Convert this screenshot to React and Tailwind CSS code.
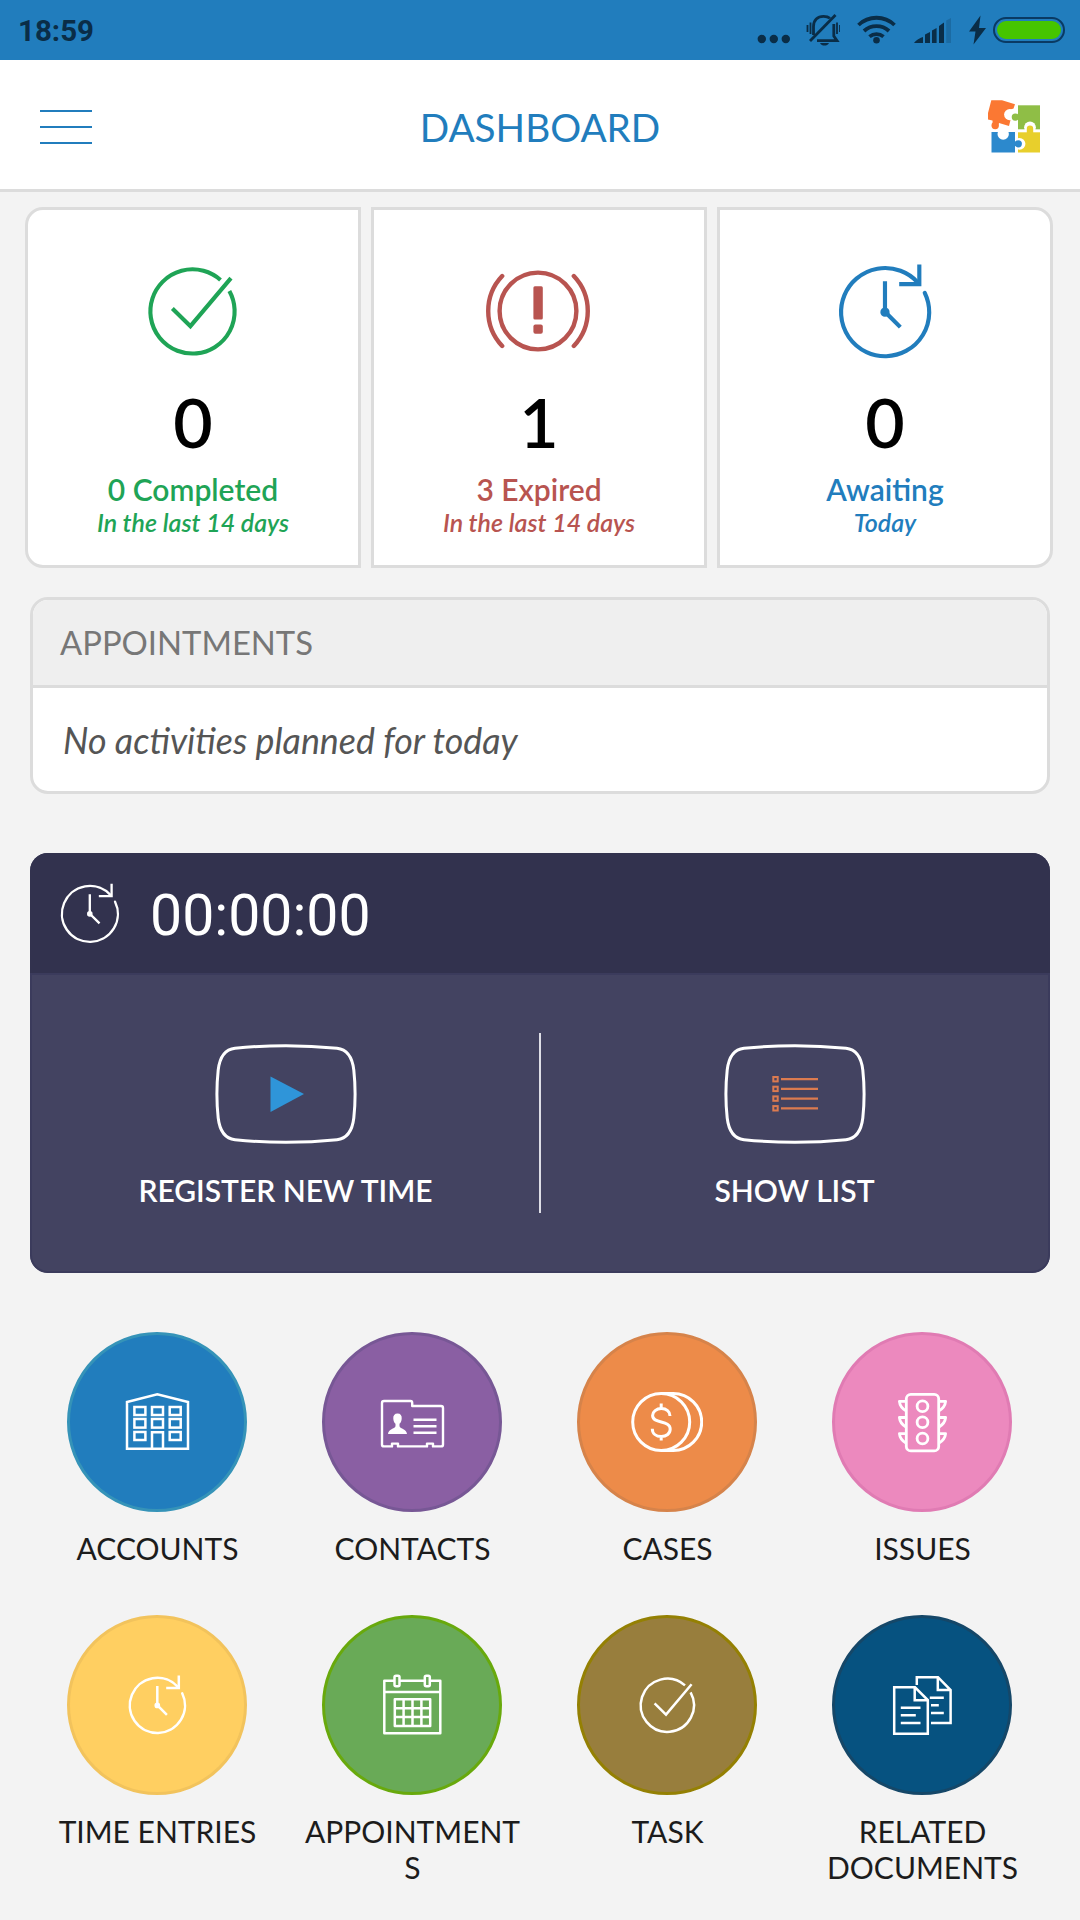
import React from "react";

const svgProps = {
  fill: "none",
  stroke: "currentColor",
  viewBox: "0 0 72 72",
};

const ClockIcon = ({ className, strokeWidth = 2.5 }) => (
  <svg {...svgProps} strokeWidth={strokeWidth} className={className}>
    <path d="M61.2 24.3A27.6 27.6 0 1 1 56.6 17.6" strokeLinecap="round" />
    <path d="M57.8 6.6V18.9H45.2" />
    <path d="M36.3 17v19.2l9.6 9.6" />
    <circle cx="36.3" cy="36.4" r="1.6" fill="currentColor" />
  </svg>
);

const CheckIcon = ({ className, strokeWidth = 2.5 }) => (
  <svg {...svgProps} strokeWidth={strokeWidth} className={className}>
    <path d="M59.6 23.4A26.6 26.6 0 1 1 54 16.4" />
    <path d="M23.6 34.4L35 45.6L60.6 15.2" />
  </svg>
);

const AlertIcon = ({ className }) => (
  <svg fill="none" stroke="currentColor" strokeWidth="4.4" viewBox="0 0 110 90" className={className}>
    <circle cx="55" cy="45" r="38.4" />
    <path d="M19.2 10A50.8 50.8 0 0 0 19.2 80M90.8 10A50.8 50.8 0 0 1 90.8 80" strokeLinecap="round" />
    <rect x="50.4" y="20.2" width="9.4" height="33.4" rx="1.5" fill="currentColor" stroke="none" />
    <rect x="50.4" y="58.4" width="9.4" height="9.4" rx="2" fill="currentColor" stroke="none" />
  </svg>
);

const BuildingIcon = ({ className }) => (
  <svg {...svgProps} strokeWidth="2.5" className={className}>
    <path d="M6 62.7V16L36.3 8.3L67 16V62.7Z" />
    {[13.4, 31, 48.7].map((x) => (
      <g key={x}>
        <rect x={x} y="21" width="11" height="8" />
        <rect x={x} y="33" width="11" height="8.6" />
        {x !== 31 && <rect x={x} y="46" width="11" height="8" />}
      </g>
    ))}
    <path d="M31 62.7V46.2H42V62.7" />
  </svg>
);

const ContactIcon = ({ className }) => (
  <svg {...svgProps} strokeWidth="2.4" strokeLinejoin="round" className={className}>
    <path d="M8 15H34.5a1.7 1.7 0 0 1 1.7 1.7V20H65a2 2 0 0 1 2 2V58.4a2 2 0 0 1-2 2H57V57.6H51V60.4H22V57.6H16V60.4H8a2 2 0 0 1-2-2V17a2 2 0 0 1 2-2Z" />
    <path
      d="M21.6 27.4c-3 0-4.6 2-4.3 5 .1 2.3 1 4.3 2.2 5.4v2.4c-1 2.8-7 2.4-7.5 7.8H31c-.5-5.4-6.5-5-7.5-7.8v-2.4c1.2-1.1 2.1-3.1 2.2-5.4.3-3-1.2-5-4.1-5Z"
      fill="currentColor"
      stroke="none"
    />
    <path d="M37.5 33.7h23M37.5 40.3h23M37.5 46.7h23" />
  </svg>
);

const CoinsIcon = ({ className }) => (
  <svg {...svgProps} strokeWidth="3" className={className}>
    <circle cx="30.2" cy="36" r="28.5" />
    <path d="M30.2 7.5H42.2a28.5 28.5 0 0 1 0 57H30.2" />
    <path d="M39 29.9c0-4.3-3.6-7.3-8.6-7.3s-8.8 3-8.8 6.8c0 8.8 17.6 4.4 17.6 13.6 0 4.6-3.8 7.6-8.9 7.6-5.3 0-9-3.2-9-7.9M30.2 17.5v5M30.2 50.5v4" />
  </svg>
);

const TrafficLightIcon = ({ className }) => (
  <svg {...svgProps} strokeWidth="2.8" strokeLinejoin="round" className={className}>
    <rect x="20.3" y="8.3" width="32.4" height="56.6" rx="4.5" />
    {[20.2, 36.3, 52.5].map((y) => (
      <circle key={y} cx="36.5" cy={y} r="5.4" />
    ))}
    <path d="M20.3 15.3H13.4c.4 4 3 7.5 6.9 9.7M20.3 31.5H13.4c.4 4 3 7.5 6.9 9.7M20.3 47.7H13.4c.4 4 3 7.5 6.9 9.7" />
    <path d="M52.7 15.3H59.6c-.4 4-3 7.5-6.9 9.7M52.7 31.5H59.6c-.4 4-3 7.5-6.9 9.7M52.7 47.7H59.6c-.4 4-3 7.5-6.9 9.7" />
  </svg>
);

const CalendarIcon = ({ className }) => (
  <svg {...svgProps} strokeWidth="2.5" strokeLinejoin="round" className={className}>
    <path d="M18.5 11.8H8.3V64.3H64.3V11.8H53.8M23.5 11.8H48.8M8.3 23H64.3" />
    <rect x="18.5" y="6.8" width="5" height="10.4" rx="1.5" />
    <rect x="48.8" y="6.8" width="5" height="10.4" rx="1.5" />
    <path d="M18.8 30.3H54.2V57H18.8ZM18.8 39.2H54.2M18.8 48.1H54.2M27.6 30.3V57M36.5 30.3V57M45.4 30.3V57" />
  </svg>
);

const DocumentsIcon = ({ className }) => (
  <svg {...svgProps} strokeWidth="2.5" className={className}>
    <path d="M8.2 18.3H29L41.8 31V64.8H8.2ZM28.7 18.3V31.2H41.8" />
    <path d="M14.8 38.7H34.5M14.8 46.3H29.8M14.8 54H34.5" />
    <path d="M30.8 16V8.2H52L64.6 21V54H45M51.8 8.2V21H64.6" />
    <path d="M43.8 28.7H57.8M45 36.3H52.8M45 44H57.8" />
  </svg>
);

const Logo = () => (
  <svg viewBox="0 0 52 53" className="mt-[3px] h-[53px] w-[52px]">
    <path d="M3.3 .3H14L27 4.2L25 10L21 26L11 23L9.5 27H5L4.5 20.5L0 19.5V13Z" fill="#fb7833" />
    <circle cx="7.2" cy="25.5" r="3.7" fill="#fb7833" />
    <circle cx="21.7" cy="14.6" r="5.6" fill="#fff" />
    <path d="M21.7 9.8L25.6 8.5L28 13V18L22 19Z" fill="#fff" />
    <rect x="30" y="5.3" width="22" height="24" fill="#8fbe46" />
    <circle cx="27.3" cy="17.1" r="3.6" fill="#8fbe46" />
    <rect x="27" y="15" width="4" height="4" fill="#8fbe46" />
    <circle cx="42" cy="27.3" r="5.9" fill="#fff" />
    <rect x="30" y="32.3" width="22" height="20.2" fill="#e8cf2c" />
    <path d="M38.8 33V28.8a3.2 3.2 0 0 1 6.4 0V33Z" fill="#e8cf2c" />
    <circle cx="31.5" cy="43.8" r="5.9" fill="#fff" />
    <path d="M3.5 32H27V52.5H3.5Z" fill="#2c89cd" />
    <circle cx="30.3" cy="43.8" r="3.6" fill="#2c89cd" />
    <rect x="26.5" y="41.7" width="4" height="4.2" fill="#2c89cd" />
    <circle cx="15.2" cy="34" r="5.7" fill="#fff" />
  </svg>
);

const StatusBar = () => (
  <div className="flex h-[60px] items-center justify-between bg-[#217dbd] pr-[15px] pl-[18px] text-[#0a2d47]">
    <span className="pt-[3px] font-[Roboto,sans-serif] text-[29.5px] leading-none font-bold">18:59</span>
    <div className="flex items-center">
      <svg viewBox="0 0 33 34" className="mr-[16px] h-[34px] w-[33px]" fill="currentColor">
        <circle cx="4.8" cy="26" r="4.2" />
        <circle cx="16.8" cy="26" r="4.2" />
        <circle cx="28.8" cy="26" r="4.2" />
      </svg>
      <svg viewBox="0 0 34 34" className="mr-[17px] h-[34px] w-[34px]" fill="none" stroke="currentColor" strokeWidth="2.8">
        <path d="M7.5 22V13.5C7.5 7 11.5 3.3 17.5 3.3c3 0 5 .7 6.500 2" />
        <path d="M27.8 11V23L31 27.6H11" />
        <path d="M4 28L29.5 2" />
        <path d="M14 30h9c-1 2-2.6 2.6-4.5 2.6s-3.5-.6-4.5-2.6Z" fill="currentColor" stroke="none" />
        <path d="M1.5 12v7M4.5 9.5v11.5M31 9.5v11.5M34 12v7" strokeWidth="1.8" />
      </svg>
      <svg viewBox="0 0 39 34" className="mr-[18px] h-[34px] w-[39px]" fill="none" stroke="currentColor" strokeWidth="3.8">
        <path d="M1.5 12a26 26 0 0 1 36 0M7 18a18.5 18.5 0 0 1 25 0M12.5 23.6a11 11 0 0 1 14 0" />
        <circle cx="19.5" cy="27.2" r="3.3" fill="currentColor" stroke="none" />
      </svg>
      <svg viewBox="0 0 37 34" className="mr-[18px] h-[34px] w-[37px]" fill="currentColor">
        <path d="M0 30C3 26.5 5 25.5 9 24V30ZM11 21.5L16 19V30H11ZM18 17.5L22.6 15V30H18ZM25 13L30 9.5V30H25Z" />
        <path d="M32.2 7.5L37 5V30H32.2Z" opacity=".22" />
      </svg>
      <svg viewBox="0 0 17 34" className="mr-[7px] h-[34px] w-[17px]" fill="currentColor">
        <path d="M11.5 2.5L0 18.5H6.5L4.5 31.5L17 15H10Z" />
      </svg>
      <div className="h-[26px] w-[72px] rounded-full border-2 border-[#0a3a63] p-[2px]">
        <div className="h-full rounded-full bg-[#46c500]" />
      </div>
    </div>
  </div>
);

const Header = () => (
  <header className="flex h-[132px] items-center justify-between border-b-[3px] border-[#dcdcdc] bg-white px-[40px]">
    <div className="flex w-[52px] flex-col gap-[14px] pt-[4px]">
      <span className="h-[2px] bg-[#217dbd]" />
      <span className="h-[2px] bg-[#217dbd]" />
      <span className="h-[2px] bg-[#217dbd]" />
    </div>
    <h1 className="pt-[6px] text-[38.7px] leading-none text-[#217dbd]">DASHBOARD</h1>
    <Logo />
  </header>
);

const StatCard = ({ icon, count, title, subtitle, className }) => (
  <div className={`flex h-[361px] flex-1 flex-col items-center border-[3px] border-[#dcdcdc] bg-white pt-[43px] ${className}`}>
    <div className="flex h-[116px] items-center justify-center">{icon}</div>
    <p className="mt-[12px] text-[68px] leading-[82px] font-semibold text-black">{count}</p>
    <p className="mt-[8px] text-[30px] leading-[36px] font-semibold">{title}</p>
    <p className="mt-px text-[25px] leading-[28px] font-semibold italic">{subtitle}</p>
  </div>
);

const TimerButton = ({ label, children }) => (
  <div className="flex flex-1 flex-col items-center pt-[11px]">
    <svg viewBox="0 0 142 100" className="h-[100px] w-[142px]" fill="none">
      <path
        d="M20 4.3Q71 -1 122 4.3C133 5.5 137.5 15 138.8 26Q141.4 50 138.8 74C137.5 85 133 94.5 122 95.7Q71 101 20 95.7C9 94.5 4.5 85 3.2 74Q.6 50 3.2 26C4.5 15 9 5.5 20 4.3Z"
        stroke="#fff"
        strokeWidth="3"
      />
      {children}
    </svg>
    <span className="mt-[28px] text-[30px] leading-[36px] font-semibold text-white">{label}</span>
  </div>
);

const shortcuts = [
  { label: "ACCOUNTS", Icon: BuildingIcon, color: "bg-[#217dbd] border-[#3593b8]" },
  { label: "CONTACTS", Icon: ContactIcon, color: "bg-[#8a5fa3] border-[#775795]" },
  { label: "CASES", Icon: CoinsIcon, color: "bg-[#ed8b49] border-[#d6834a]" },
  { label: "ISSUES", Icon: TrafficLightIcon, color: "bg-[#ec89be] border-[#e07bb3]" },
  { label: "TIME ENTRIES", Icon: ClockIcon, color: "bg-[#ffcf61] border-[#f2c35c]" },
  { label: "APPOINTMENTS", Icon: CalendarIcon, color: "bg-[#69aa57] border-[#68a90c]" },
  { label: "TASK", Icon: CheckIcon, color: "bg-[#987e3d] border-[#948003]" },
  { label: "RELATED DOCUMENTS", Icon: DocumentsIcon, color: "bg-[#065280] border-[#154768]" },
];

const Shortcut = ({ label, Icon, color }) => (
  <div className="flex h-[283px] flex-col items-center">
    <div className={`mr-px flex h-[180px] w-[180px] items-center justify-center rounded-full border-[3px] text-white ${color}`}>
      <Icon className="h-[72px] w-[72px]" />
    </div>
    <p className="mt-[18px] w-[222px] text-center text-[30px] leading-[36px] wrap-break-word text-[#1c1c1c]">{label}</p>
  </div>
);

export default function App() {
  return (
    <div className="h-[1920px] w-[1080px] overflow-hidden bg-[#f3f3f3] font-[Lato,sans-serif]">
      <StatusBar />
      <Header />

      <div className="mt-[15px] flex gap-[10px] pr-[27px] pl-[25px]">
        <StatCard
          className="rounded-l-[18px] text-[#1fa456]"
          icon={<CheckIcon className="mr-[3px] h-[114px] w-[114px]" strokeWidth={2.6} />}
          count="0"
          title="0 Completed"
          subtitle="In the last 14 days"
        />
        <StatCard
          className="text-[#b85450]"
          icon={<AlertIcon className="mr-[2px] h-[90px] w-[110px]" />}
          count="1"
          title="3 Expired"
          subtitle="In the last 14 days"
        />
        <StatCard
          className="rounded-r-[18px] text-[#217dbd]"
          icon={<ClockIcon className="mr-px h-[115px] w-[115px]" strokeWidth={2.6} />}
          count="0"
          title="Awaiting"
          subtitle="Today"
        />
      </div>

      <section className="mx-[30px] mt-[29px] h-[197px] overflow-hidden rounded-[18px] border-[3px] border-[#dcdcdc] bg-white">
        <h2 className="flex h-[88px] items-center border-b-[3px] border-[#dcdcdc] bg-[#efefef] pl-[27px] text-[32.8px] text-[#777]">
          APPOINTMENTS
        </h2>
        <p className="flex h-[106px] items-center pl-[30px] text-[35.8px] text-[#555] italic">
          No activities planned for today
        </p>
      </section>

      <section className="mx-[30px] mt-[59px] h-[420px] overflow-hidden rounded-[18px] bg-[#434361]">
        <div className="flex h-[120px] items-center bg-[#32324e] pl-[23px] text-white">
          <ClockIcon className="h-[73px] w-[73px]" strokeWidth={2.3} />
          <span className="ml-[24px] pt-[5px] font-[Roboto,sans-serif] text-[57.2px] leading-none">00:00:00</span>
        </div>
        <div className="flex h-[300px] rounded-b-[18px] border-2 border-[#3b3b5c] pt-[58px]">
          <TimerButton label="REGISTER NEW TIME">
            <path d="M55.5 32.5L89 50L55.5 68Z" fill="#2f95d9" />
          </TimerButton>
          <div className="h-[180px] w-[2px] bg-[#dedee6]" />
          <TimerButton label="SHOW LIST">
            {[35.2, 44.9, 54.6, 64.3].map((y) => (
              <g key={y} stroke="#dc7b50">
                <rect x="49.3" y={y - 2.2} width="4.4" height="4.4" strokeWidth="2" />
                <path d={`M57 ${y}H94`} strokeWidth="2.3" />
              </g>
            ))}
          </TimerButton>
        </div>
      </section>

      <div className="mx-[30px] mt-[59px] grid grid-cols-4">
        {shortcuts.map((item) => (
          <Shortcut key={item.label} {...item} />
        ))}
      </div>
    </div>
  );
}
